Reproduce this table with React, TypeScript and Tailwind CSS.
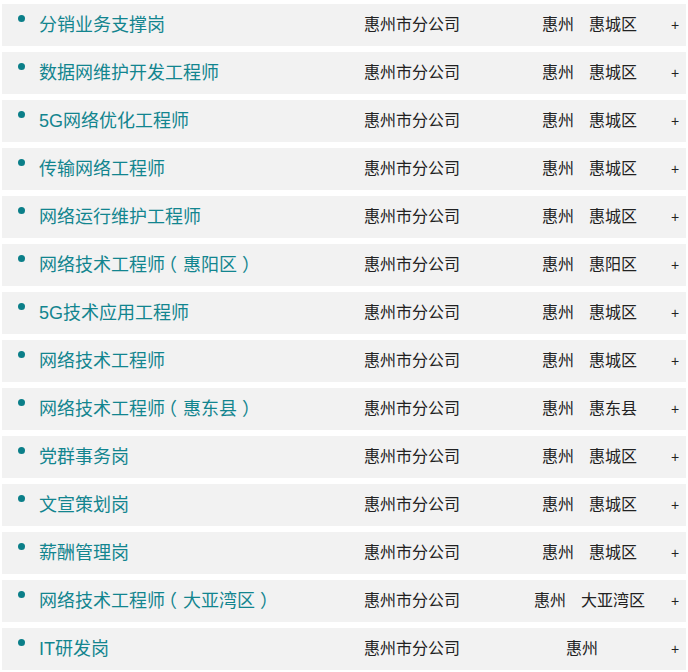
import React from 'react';

type Job = { title: string; company: string; city: string; district: string };

const jobs: Job[] = [
    { title: '分销业务支撑岗', company: '惠州市分公司', city: '惠州', district: '惠城区' },
    { title: '数据网维护开发工程师', company: '惠州市分公司', city: '惠州', district: '惠城区' },
    { title: '5G网络优化工程师', company: '惠州市分公司', city: '惠州', district: '惠城区' },
    { title: '传输网络工程师', company: '惠州市分公司', city: '惠州', district: '惠城区' },
    { title: '网络运行维护工程师', company: '惠州市分公司', city: '惠州', district: '惠城区' },
    { title: '网络技术工程师（惠阳区）', company: '惠州市分公司', city: '惠州', district: '惠阳区' },
    { title: '5G技术应用工程师', company: '惠州市分公司', city: '惠州', district: '惠城区' },
    { title: '网络技术工程师', company: '惠州市分公司', city: '惠州', district: '惠城区' },
    { title: '网络技术工程师（惠东县）', company: '惠州市分公司', city: '惠州', district: '惠东县' },
    { title: '党群事务岗', company: '惠州市分公司', city: '惠州', district: '惠城区' },
    { title: '文宣策划岗', company: '惠州市分公司', city: '惠州', district: '惠城区' },
    { title: '薪酬管理岗', company: '惠州市分公司', city: '惠州', district: '惠城区' },
    { title: '网络技术工程师（大亚湾区）', company: '惠州市分公司', city: '惠州', district: '大亚湾区' },
    { title: 'IT研发岗', company: '惠州市分公司', city: '惠州', district: '' },
];

const font = { fontFamily: '"Liberation Sans", "Noto Sans CJK SC", sans-serif' };

// full-width brackets sit centred in their cell in the original font:
// halve them with 'halt' and pad them back out to a full cell
const Title: React.FC<{ text: string }> = ({ text }) => {
    const parts = text.split(/([（）])/).filter(Boolean);
    return (
        <>
            {parts.map((p, i) =>
                p === '（' ? (
                    <span key={i} className="[font-feature-settings:'halt'] ml-[3px] mr-[6px]">{p}</span>
                ) : p === '）' ? (
                    <span key={i} className="[font-feature-settings:'halt'] ml-[5px] mr-[4px]">{p}</span>
                ) : (
                    <span key={i}>{p}</span>
                )
            )}
        </>
    );
};

export default function App() {
    return (
        <div className="bg-white w-[688px] pt-[4px]" style={font}>
            {jobs.map((job, i) => (
                <div key={i} className="flex items-center h-[42px] mx-[2px] mb-[6px] bg-[#f2f2f2]">
                    {/* bullet sits a bit above the text, like a list marker */}
                    <span className="self-start mt-[11px] ml-[16px] w-[7px] h-[7px] rounded-full bg-[#0b7f89] shrink-0" />
                    <div className="w-[325px] ml-[14px] text-[18px] text-[#12858f] whitespace-nowrap">
                        <Title text={job.title} />
                    </div>
                    <div className="w-[156px] text-[16px] text-[#222] whitespace-nowrap">{job.company}</div>
                    <div className="w-[139px] flex justify-center text-[16px] text-[#222] whitespace-nowrap">
                        <span className="mr-[15px]">{job.city}</span>
                        <span>{job.district}</span>
                    </div>
                    <div className="flex-1 pl-[12px] text-[14px] text-[#222]">+</div>
                </div>
            ))}
        </div>
    );
}
